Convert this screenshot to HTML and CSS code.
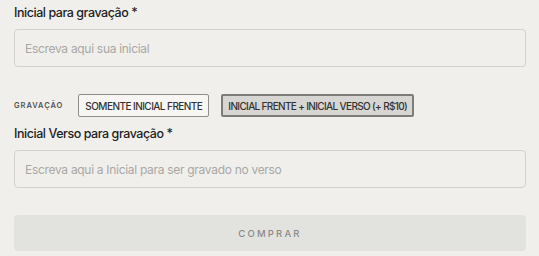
FILE: index.html
```html
<!DOCTYPE html>
<html lang="pt-BR">
<head>
    <meta charset="UTF-8">
    <meta name="viewport" content="width=device-width, initial-scale=1.0">
    <title>Gravação</title>
    <link rel="stylesheet" href="styles.css">
</head>
<body>
    <form class="engraving">
        <label class="field">
            <span class="field-label">Inicial para gravação *</span>
            <input class="field-input" type="text" placeholder="Escreva aqui sua inicial">
        </label>

        <div class="options">
            <span class="options-title">Gravação</span>
            <button type="button" class="option">Somente inicial frente</button>
            <button type="button" class="option selected">Inicial frente + inicial verso (+ R$10)</button>
        </div>

        <label class="field">
            <span class="field-label">Inicial Verso para gravação *</span>
            <input class="field-input" type="text" placeholder="Escreva aqui a Inicial para ser gravado no verso">
        </label>

        <button type="button" class="buy" disabled>Comprar</button>
    </form>
</body>
</html>
```

FILE: styles.css
```css
:root {
    --bg: #f0efeb;
    --text: #1e1e1e;
    --muted: #a9a8a5;
    --line: #d2d1cd;
}
* {
    margin: 0;
    padding: 0;
    box-sizing: border-box;
}
body {
    background-color: var(--bg);
    font-family: Inter, "Noto Sans", sans-serif;
    color: var(--text);
    padding: 5px 13px 0 14px;
}
.engraving {
    display: flex;
    flex-direction: column;
}
.field {
    display: flex;
    flex-direction: column;
    gap: 8px;
}
.field-label {
    font-size: 12.5px;
    font-weight: 500;
    letter-spacing: -0.45px;
    line-height: 16px;
}
.field-input {
    height: 38px;
    border: 1px solid var(--line);
    border-radius: 4px;
    background: transparent;
    padding: 0 10px;
    font-family: inherit;
    font-size: 12px;
    letter-spacing: -0.3px;
    color: var(--text);
    outline: none;
}
.field-input::placeholder {
    color: var(--muted);
}
.options {
    display: flex;
    align-items: center;
    margin: 27px 0 9px;
}
.options-title {
    font-size: 7.5px;
    font-weight: 600;
    letter-spacing: 0.95px;
    text-transform: uppercase;
    color: #555;
    margin-right: 15px;
}
.option {
    height: 23px;
    padding: 0 6px;
    margin-right: 12px;
    border: 1px solid #8e8d8a;
    border-radius: 2px;
    background: #f7f6f3;
    font-family: inherit;
    font-size: 10px;
    font-weight: 500;
    letter-spacing: -0.55px;
    text-transform: uppercase;
    color: #333;
}
.option.selected {
    background: #d7d6d2;
    border: 2px solid #7d7c79;
    padding: 0 5px;
    letter-spacing: -0.65px;
}
.buy {
    margin-top: 27px;
    height: 36px;
    border: none;
    border-radius: 4px;
    background: #e2e2df;
    font-family: inherit;
    font-size: 9.5px;
    font-weight: 500;
    letter-spacing: 2.2px;
    text-transform: uppercase;
    color: #8a8a88;
}
```
